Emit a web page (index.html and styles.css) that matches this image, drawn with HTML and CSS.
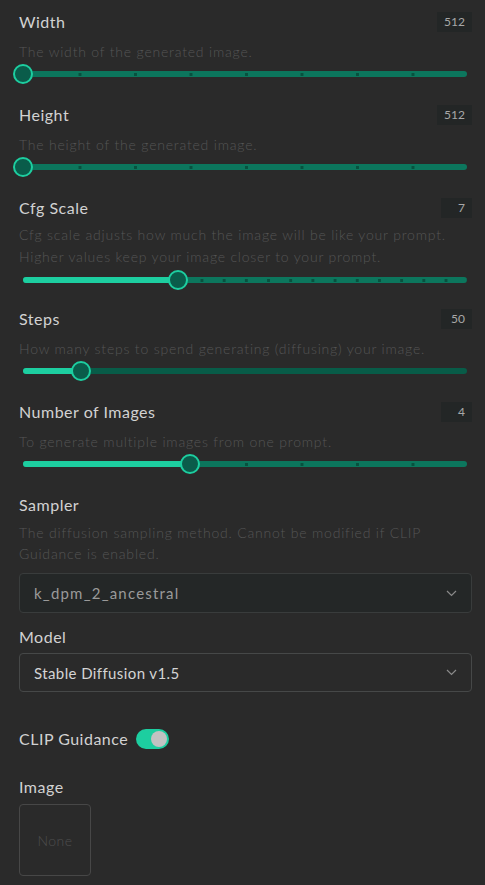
FILE: index.html
```html
<!DOCTYPE html>
<html lang="en">
<head>
<meta charset="utf-8">
<title>Settings</title>
<link rel="stylesheet" href="styles.css">
</head>
<body>
<div class="panel">
  <section class="field">
    <div class="head"><span class="label">Width</span><span class="value">512</span></div>
    <p class="desc">The width of the generated image.</p>
    <div class="slider"><div class="track ticks-8"><div class="fill" style="width:0%"></div><div class="thumb" style="left:0%"></div></div></div>
  </section>
  <section class="field">
    <div class="head"><span class="label">Height</span><span class="value">512</span></div>
    <p class="desc">The height of the generated image.</p>
    <div class="slider"><div class="track ticks-8"><div class="fill" style="width:0%"></div><div class="thumb" style="left:0%"></div></div></div>
  </section>
  <section class="field cfg">
    <div class="head"><span class="label">Cfg Scale</span><span class="value">7</span></div>
    <p class="desc">Cfg scale adjusts how much the image will be like your prompt. Higher values keep your image closer to your prompt.</p>
    <div class="slider"><div class="track ticks-20"><div class="fill" style="width:35%"></div><div class="thumb" style="left:35%"></div></div></div>
  </section>
  <section class="field">
    <div class="head"><span class="label">Steps</span><span class="value">50</span></div>
    <p class="desc">How many steps to spend generating (diffusing) your image.</p>
    <div class="slider"><div class="track dark"><div class="fill" style="width:13%"></div><div class="thumb" style="left:13%"></div></div></div>
  </section>
  <section class="field">
    <div class="head"><span class="label">Number of Images</span><span class="value">4</span></div>
    <p class="desc">To generate multiple images from one prompt.</p>
    <div class="slider"><div class="track ticks-8"><div class="fill" style="width:37.5%"></div><div class="thumb" style="left:37.5%"></div></div></div>
  </section>
  <section class="field sampler">
    <div class="head"><span class="label">Sampler</span></div>
    <p class="desc">The diffusion sampling method. Cannot be modified if CLIP Guidance is enabled.</p>
    <div class="select disabled">
      <span>k_dpm_2_ancestral</span>
      <svg class="chev" width="11" height="7" viewBox="0 0 11 7"><polyline points="1,1 5.5,5.5 10,1" fill="none" stroke="currentColor" stroke-width="1.2"/></svg>
    </div>
  </section>
  <section class="field model">
    <div class="head"><span class="label">Model</span></div>
    <div class="select">
      <span>Stable Diffusion v1.5</span>
      <svg class="chev" width="11" height="7" viewBox="0 0 11 7"><polyline points="1,1 5.5,5.5 10,1" fill="none" stroke="currentColor" stroke-width="1.2"/></svg>
    </div>
  </section>
  <section class="toggle-row">
    <span class="label">CLIP Guidance</span>
    <span class="toggle"><span class="knob"></span></span>
  </section>
  <section class="field image">
    <div class="head"><span class="label">Image</span></div>
    <div class="imgbox">None</div>
  </section>
</div>
</body>
</html>
```
FILE: styles.css
```css
html, body {
  margin: 0;
  padding: 0;
  background: #2a2a2a;
}
body {
  font-family: Lato, "Noto Sans", sans-serif;
  width: 485px;
  height: 885px;
  overflow: hidden;
}
.panel {
  padding: 12px 13px 0 19px;
  display: flex;
  flex-direction: column;
}
.field {
  display: flex;
  flex-direction: column;
  margin-bottom: 21px;
}
.head {
  height: 20px;
  display: flex;
  align-items: center;
  justify-content: space-between;
}
.label {
  font-size: 16px;
  color: #d2d2d2;
  letter-spacing: 0.5px;
  line-height: 20px;
}
.value {
  height: 20px;
  min-width: 17px;
  padding: 0 7px;
  box-sizing: content-box;
  background: #232626;
  color: #a8a8a8;
  font-size: 12px;
  line-height: 20px;
  text-align: right;
}
.desc {
  margin: 9px 0 0;
  font-size: 14px;
  font-weight: 300;
  line-height: 21px;
  color: #555555;
  letter-spacing: 0.8px;
}
.cfg {
  margin-bottom: 19px;
}
.cfg .desc {
  margin-top: 6px;
  line-height: 22px;
}
.slider {
  height: 20px;
  margin-top: 2px;
  padding: 0 5px 0 4px;
  display: flex;
  align-items: center;
}
.track {
  position: relative;
  flex: 1;
  height: 6px;
  border-radius: 3px;
  background-color: #0c765d;
  background-repeat: repeat-x;
  background-position: 0 center;
}
.track.dark {
  background-color: #085c48;
}
.ticks-8 {
  background-image: linear-gradient(90deg, #07513f 0 3px, transparent 3px);
  background-size: 12.5% 3px;
}
.ticks-20 {
  background-image: linear-gradient(90deg, #07513f 0 3px, transparent 3px);
  background-size: 5% 3px;
}
.fill {
  position: absolute;
  left: 0;
  top: 0;
  bottom: 0;
  border-radius: 3px;
  background: #1dcea0;
}
.thumb {
  position: absolute;
  top: 50%;
  width: 16px;
  height: 16px;
  border: 2px solid #1dcea0;
  border-radius: 50%;
  background: #0a5c4a;
  transform: translate(-50%, -50%);
}
.sampler .desc {
  margin-top: 7px;
}
.select {
  height: 38px;
  margin-top: 9px;
  border: 1px solid #464848;
  border-radius: 4px;
  padding: 0 14px 0 14px;
  display: flex;
  align-items: center;
  justify-content: space-between;
  font-size: 15px;
  color: #d4d4d4;
  letter-spacing: 0.4px;
}
.select.disabled {
  background: #242727;
  border-color: #393c3c;
  color: #9a9a9a;
  letter-spacing: 1.2px;
}
.chev {
  color: #8a8a8a;
}
.model {
  margin-top: -7px;
}
.model .select {
  height: 37px;
  margin-top: 6px;
}
.toggle-row {
  margin-top: 15px;
  height: 22px;
  display: flex;
  align-items: center;
  gap: 8px;
}
.toggle {
  width: 33px;
  height: 20px;
  border-radius: 10px;
  background: #1dcea0;
  display: flex;
  align-items: center;
  justify-content: flex-end;
  padding: 0 2px;
  box-sizing: border-box;
}
.knob {
  width: 16px;
  height: 16px;
  border-radius: 50%;
  background: #c2c2c2;
}
.image {
  margin-top: 27px;
}
.imgbox {
  margin-top: 7px;
  width: 70px;
  height: 70px;
  border: 1px solid #474747;
  border-radius: 4px;
  display: flex;
  align-items: center;
  justify-content: center;
  color: #4e4e4e;
  font-size: 14px;
  font-weight: 300;
  letter-spacing: 0.4px;
}
```
